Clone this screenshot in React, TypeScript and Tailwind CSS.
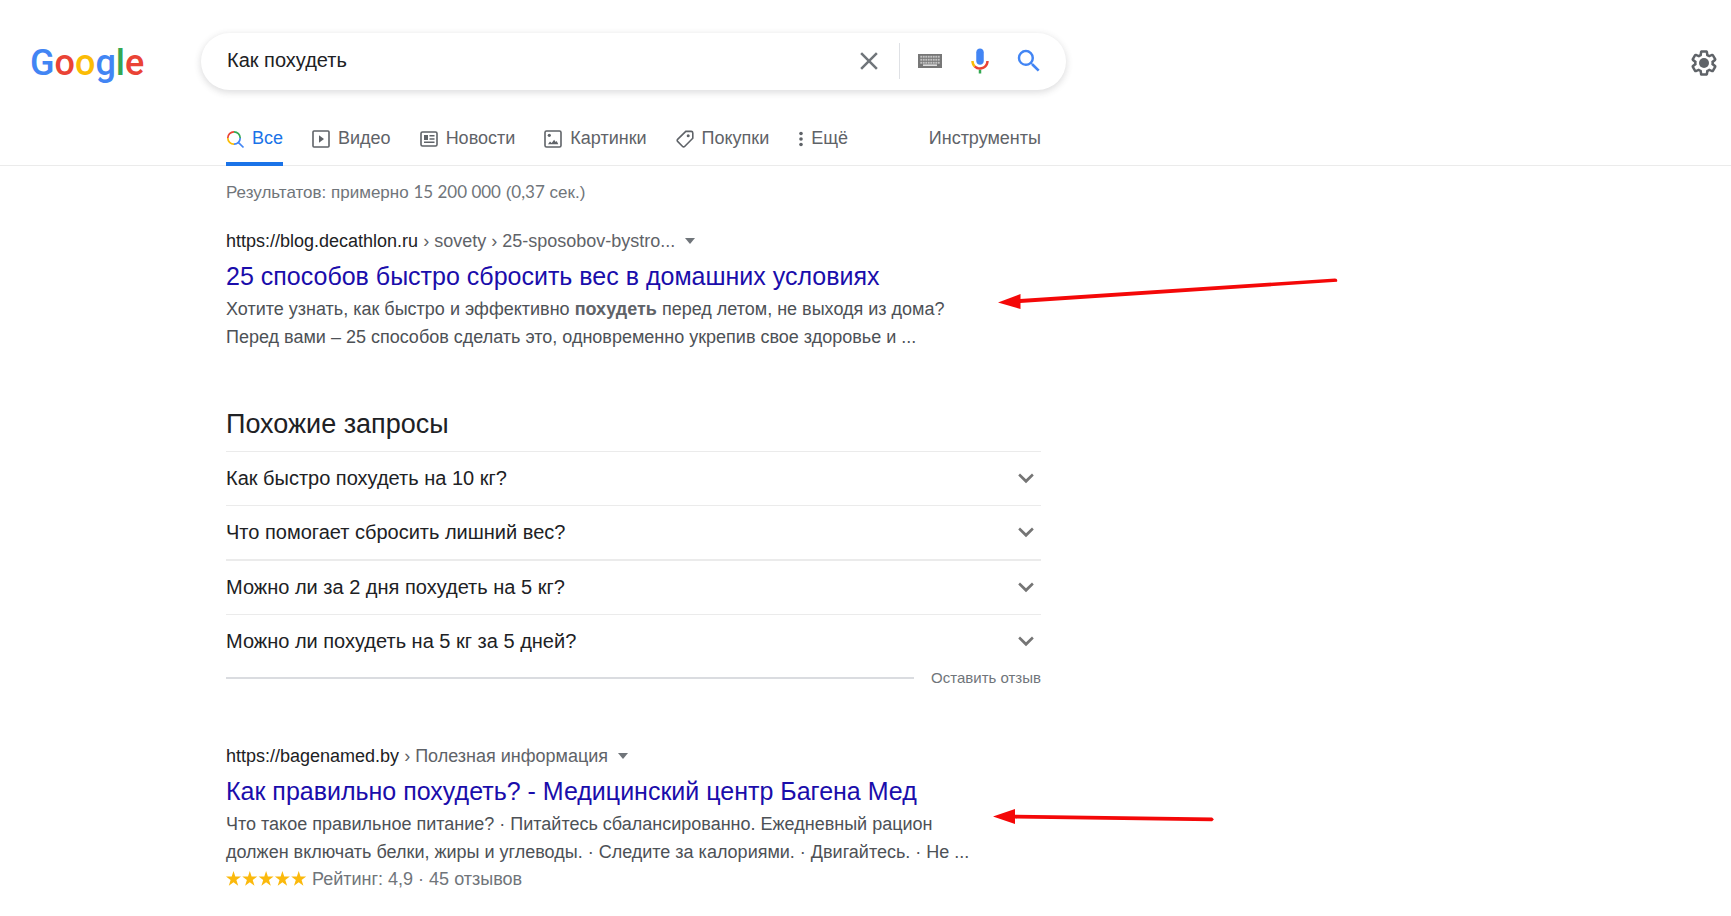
import type { ReactNode } from 'react';

const queries = [
  'Как быстро похудеть на 10 кг?',
  'Что помогает сбросить лишний вес?',
  'Можно ли за 2 дня похудеть на 5 кг?',
  'Можно ли похудеть на 5 кг за 5 дней?',
];

function Logo() {
  return (
    <a href="#" aria-label="Google" className="font-[Roboto,sans-serif] text-[36px] leading-[48px] font-medium">
      <span className="text-[#4285f4]">G</span>
      <span className="text-[#ea4335]">o</span>
      <span className="text-[#fbbc05]">o</span>
      <span className="text-[#4285f4]">g</span>
      <span className="text-[#34a853]">l</span>
      <span className="text-[#ea4335]">e</span>
    </a>
  );
}

function KeyboardIcon() {
  const keys = [0, 1, 2, 3, 4, 5, 6, 7];
  return (
    <svg width="24" height="14" viewBox="0 0 24 14" className="block">
      <rect width="24" height="14" fill="#777" />
      {[2, 5, 8].map((y) =>
        keys.map((k) => <rect key={`${y}-${k}`} x={2.3 + k * 2.5} y={y - 0.2} width="1.9" height="1.9" fill="#c4c4c4" />),
      )}
      <rect x="5" y="10.4" width="14" height="1.6" fill="#ddd" />
    </svg>
  );
}

function SearchBar() {
  return (
    <form
      role="search"
      onSubmit={(e) => e.preventDefault()}
      className="flex h-[57px] w-[865px] items-center rounded-full bg-white pr-[22px] pb-[2px] pl-[26px] shadow-[0_2px_6px_1px_rgba(64,60,67,0.16)]"
    >
      <input
        type="text"
        aria-label="Найти"
        defaultValue="Как похудеть"
        className="h-8 min-w-0 flex-1 bg-transparent text-[20px] text-[#202124] outline-none"
      />
      <button type="button" aria-label="Удалить" className="mr-[15px]">
        <svg width="30" height="30" viewBox="0 0 24 24" className="block" fill="#70757a">
          <path d="M19 6.41L17.59 5 12 10.59 6.41 5 5 6.41 10.59 12 5 17.59 6.41 19 12 13.41 17.59 19 19 17.59 13.41 12z" />
        </svg>
      </button>
      <div className="h-9 border-l border-[#dfe1e5]" />
      <button type="button" aria-label="Экранная клавиатура" className="ml-[18px]">
        <KeyboardIcon />
      </button>
      <button type="button" aria-label="Голосовой поиск" className="ml-[23px]">
        <svg width="30" height="30" viewBox="0 0 24 24" className="block">
          <path fill="#4285f4" d="M12 15c1.66 0 3-1.31 3-2.97V4.98C15 3.31 13.66 2 12 2S9 3.31 9 4.98v7.05C9 13.69 10.34 15 12 15z" />
          <path fill="#34a853" d="M11 18.92h2V22h-2z" />
          <path fill="#fbbc05" d="M7 12H5c0 1.93.78 3.68 2.05 4.95l1.41-1.41C7.56 14.63 7 13.38 7 12z" />
          <path fill="#ea4335" d="M12 16.94c-1.35 0-2.64-.54-3.54-1.43l-1.41 1.41A6.98 6.98 0 0 0 12.01 19c3.87 0 6.98-3.14 6.98-7h-2c0 2.92-2.24 4.94-4.99 4.94z" />
        </svg>
      </button>
      <button type="submit" aria-label="Поиск" className="ml-[19px]">
        <svg width="30" height="30" viewBox="0 0 24 24" className="block" fill="#4285f4">
          <path d="M15.5 14h-.79l-.28-.27A6.47 6.47 0 0 0 16 9.5 6.5 6.5 0 1 0 9.5 16c1.61 0 3.09-.59 4.23-1.57l.27.28v.79l5 4.99L20.49 19l-4.99-5zm-6 0C7.01 14 5 11.99 5 9.5S7.01 5 9.5 5 14 7.01 14 9.5 11.99 14 9.5 14z" />
        </svg>
      </button>
    </form>
  );
}

function TabIcon({ children }: { children: ReactNode }) {
  return (
    <svg width="20" height="20" viewBox="0 0 20 20" fill="none" stroke="currentColor" className="mt-[3px] shrink-0">
      {children}
    </svg>
  );
}

const tabs: { label: string; icon: ReactNode }[] = [
  {
    label: 'Видео',
    icon: (
      <>
        <rect x="2" y="2" width="16" height="16" rx="1" strokeWidth="1.6" />
        <path d="M8 6.2v7.6L13 10z" fill="currentColor" stroke="none" />
      </>
    ),
  },
  {
    label: 'Новости',
    icon: (
      <>
        <rect x="2" y="3" width="16" height="14" rx="1.5" strokeWidth="1.6" />
        <path d="M5 6h4v5H5zM10.5 6h5v1.5h-5zM10.5 9.3h5v1.5h-5zM5 12.6h10.5v1.5H5z" fill="currentColor" stroke="none" />
      </>
    ),
  },
  {
    label: 'Картинки',
    icon: (
      <>
        <rect x="2" y="2" width="16" height="16" rx="1.5" strokeWidth="1.6" />
        <circle cx="6.3" cy="6.3" r="1.6" fill="currentColor" stroke="none" />
        <path d="M5 15.2l2-2.6 1.7 1.4 2.4-3.2 1.6 2.2 1-1 1.6 3.2z" fill="currentColor" stroke="none" />
      </>
    ),
  },
  {
    label: 'Покупки',
    icon: (
      <>
        <path d="M10.8 2.4h5.4a1.6 1.6 0 0 1 1.6 1.6v5.2L9.6 17.5a1.4 1.4 0 0 1-2 0L2.6 12.4a1.4 1.4 0 0 1 0-2z" strokeWidth="1.6" />
        <circle cx="13.2" cy="6.8" r="1.5" fill="currentColor" stroke="none" />
      </>
    ),
  },
];

function Tabs() {
  return (
    <nav className="flex h-[46px] border-b border-[#ebebeb] pl-[226px] text-[18px] leading-6 text-[#5f6368]">
      <div className="flex w-[815px]">
        <a href="#" aria-current="page" className="-mb-px flex gap-[6px] border-b-4 border-[#1a73e8] pt-[6px] text-[#1a73e8]">
          <svg width="20" height="20" viewBox="0 0 20 20" fill="none" strokeWidth="1.7" className="mt-[4px] shrink-0">
            <path d="M1.8 8A6.2 6.2 0 0 1 8 1.8" stroke="#ea4335" />
            <path d="M8 1.8A6.2 6.2 0 0 1 14.2 8" stroke="#34a853" />
            <path d="M1.8 8A6.2 6.2 0 0 0 8 14.2" stroke="#fbbc05" />
            <path d="M14.2 8A6.2 6.2 0 0 1 8 14.2M12.3 12.3l5.2 5.2" stroke="#4285f4" />
          </svg>
          Все
        </a>
        {tabs.map((tab) => (
          <a key={tab.label} href="#" className="ml-[28px] flex gap-[7px] pt-[6px]">
            <TabIcon>{tab.icon}</TabIcon>
            {tab.label}
          </a>
        ))}
        <button type="button" className="ml-[28px] flex gap-[8px] self-start pt-[6px]">
          <svg width="6" height="16" viewBox="0 0 6 16" fill="currentColor" className="mt-[5px]">
            <circle cx="4" cy="2.5" r="1.8" />
            <circle cx="4" cy="8" r="1.8" />
            <circle cx="4" cy="13.5" r="1.8" />
          </svg>
          Ещё
        </button>
        <button type="button" className="ml-auto self-start pt-[6px]">
          Инструменты
        </button>
      </div>
    </nav>
  );
}

interface ResultProps {
  host: string;
  path: string;
  title: string;
  arrow: ReactNode;
  children: ReactNode;
}

function Result({ host, path, title, arrow, children }: ResultProps) {
  return (
    <article className="relative w-[815px]">
      <div className="flex items-center text-[18px] leading-6">
        <cite className="text-[#202124] not-italic">
          {host}
          <span className="text-[#5f6368]"> {path}</span>
        </cite>
        <button type="button" aria-label="О результате" className="ml-[10px]">
          <svg width="10" height="6" viewBox="0 0 10 6" className="block" fill="#70757a">
            <path d="M0 0h10L5 6z" />
          </svg>
        </button>
      </div>
      <h3 className="mt-[7px] text-[25px] leading-8 text-[#1a0dab]">
        <a href="#">{title}</a>
      </h3>
      <div className="mt-[3px] text-[18px] leading-7 text-[#4d5156]">{children}</div>
      {arrow}
    </article>
  );
}

function RelatedQueries() {
  return (
    <section className="mt-[55px] w-[815px]">
      <h2 className="text-[27px] leading-9 text-[#202124]">Похожие запросы</h2>
      <ul className="mt-[9px]">
        {queries.map((query) => (
          <li key={query} className="border-t border-[#ebebeb] nth-3:border-t-2">
            <button type="button" className="flex h-[53px] w-full items-center justify-between text-left text-[20px] text-[#202124]">
              <span className="pb-[2px]">{query}</span>
              <svg width="30" height="30" viewBox="0 0 24 24" className="block" fill="#757575">
                <path d="M7.2 7.6L12 12.2l4.8-4.6L18.2 9.1l-6.2 6.2-6.2-6.2z" />
              </svg>
            </button>
          </li>
        ))}
      </ul>
      <div className="flex items-center gap-[17px]">
        <div className="flex-1 border-t-2 border-[#dadce0]" />
        <a href="#" className="text-[15px] leading-5 text-[#70757a]">
          Оставить отзыв
        </a>
      </div>
    </section>
  );
}

export default function App() {
  return (
    <div className="bg-white font-['Liberation_Sans',Arial,sans-serif]">
      <header>
        <div className="flex items-start pt-[33px] pr-[12px]">
          <div className="w-[201px] shrink-0 pt-[6px] pl-[30px]">
            <Logo />
          </div>
          <SearchBar />
          <button type="button" aria-label="Настройки" className="mt-[15px] ml-auto">
            <svg width="30" height="30" viewBox="0 0 24 24" className="block" fill="#5f6368">
              <path d="M13.85 22.25h-3.7c-.74 0-1.36-.54-1.45-1.27l-.27-1.89c-.27-.14-.53-.29-.79-.46l-1.8.72c-.7.26-1.47-.03-1.81-.65L2.2 15.53c-.35-.66-.2-1.44.36-1.88l1.53-1.19c-.01-.15-.02-.3-.02-.46 0-.15.01-.31.02-.46l-1.52-1.19c-.59-.45-.74-1.26-.37-1.88l1.85-3.19c.34-.62 1.11-.9 1.79-.63l1.81.73c.26-.17.52-.32.78-.46l.27-1.91c.09-.7.71-1.25 1.44-1.25h3.7c.74 0 1.36.54 1.45 1.27l.27 1.89c.27.14.53.29.79.46l1.8-.72c.71-.26 1.48.03 1.82.65l1.84 3.18c.36.66.2 1.44-.36 1.88l-1.52 1.19c.01.15.02.3.02.46s-.01.31-.02.46l1.52 1.19c.56.45.72 1.23.37 1.86l-1.86 3.22c-.34.62-1.11.9-1.8.63l-1.8-.72c-.26.17-.52.32-.78.46l-.27 1.91c-.1.68-.72 1.22-1.46 1.22zm-3.23-2h2.76l.37-2.55.53-.22c.44-.18.88-.44 1.34-.78l.45-.34 2.38.96 1.38-2.4-2.03-1.58.07-.56c.03-.26.06-.51.06-.78s-.03-.53-.06-.78l-.07-.56 2.03-1.58-1.39-2.4-2.39.96-.45-.35c-.42-.32-.87-.58-1.33-.77l-.52-.22-.37-2.55h-2.76l-.37 2.55-.53.21c-.44.19-.88.44-1.34.79l-.45.33-2.38-.95-1.39 2.39 2.03 1.58-.07.56a7 7 0 0 0-.06.79c0 .26.02.53.06.78l.07.56-2.03 1.58 1.38 2.4 2.39-.96.45.35c.43.33.86.58 1.33.77l.53.22z" />
              <circle cx="12" cy="12" r="4" />
            </svg>
          </button>
        </div>
        <div className="mt-[30px]">
          <Tabs />
        </div>
      </header>
      <main className="pl-[226px]">
        <p className="mt-[14px] mb-[24px] text-[17px] leading-6 text-[#70757a]">
          Результатов: примерно <span className="font-[Lato,sans-serif]">15 200 000</span> (
          <span className="font-[Lato,sans-serif]">0,37</span> сек.)
        </p>
        <Result
          host="https://blog.decathlon.ru"
          path="› sovety › 25-sposobov-bystro..."
          title="25 способов быстро сбросить вес в домашних условиях"
          arrow={
            <svg width="340" height="32" viewBox="0 0 340 32" className="absolute top-[49px] left-[772px]" fill="#f40808">
              <path d="M22 21L337 0.4q3 0 2 3.4L22 25z" />
              <path d="M0 24.5L22.5 16v15z" />
            </svg>
          }
        >
          <p>
            Хотите узнать, как быстро и эффективно <b className="text-[#5f6368]">похудеть</b> перед летом, не выходя из дома?
            <br />
            Перед вами – 25 способов сделать это, одновременно укрепив свое здоровье и ...
          </p>
        </Result>
        <RelatedQueries />
        <div className="mt-14">
          <Result
            host="https://bagenamed.by"
            path="› Полезная информация"
            title="Как правильно похудеть? - Медицинский центр Багена Мед"
            arrow={
              <svg width="222" height="16" viewBox="0 0 222 16" className="absolute top-[65px] left-[767px]" fill="#f40808">
                <path d="M22 5.7L219 8.4q3 1.8 0 3.9L22 9.6z" />
                <path d="M0 7.6L22 0v15z" />
              </svg>
            }
          >
            <p>
              Что такое правильное питание? · Питайтесь сбалансированно. Ежедневный рацион
              <br />
              должен включать белки, жиры и углеводы. · Следите за калориями. · Двигайтесь. · Не ...
            </p>
            <div className="flex items-center gap-[5px] leading-[26px] text-[#70757a]">
              <svg width="81" height="16" viewBox="0 0 81 16" fill="#fbb90c" role="img" aria-label="Рейтинг 4,9">
                {[0, 1, 2, 3, 4].map((i) => (
                  <path key={i} transform={`translate(${i * 16.3} 0)`} d="M7.5 0l1.8 5.6h5.7l-4.6 3.5 1.8 5.7-4.7-3.5-4.7 3.5 1.8-5.7L0 5.6h5.7z" />
                ))}
              </svg>
              <span>Рейтинг: 4,9 · 45 отзывов</span>
            </div>
          </Result>
        </div>
      </main>
    </div>
  );
}
